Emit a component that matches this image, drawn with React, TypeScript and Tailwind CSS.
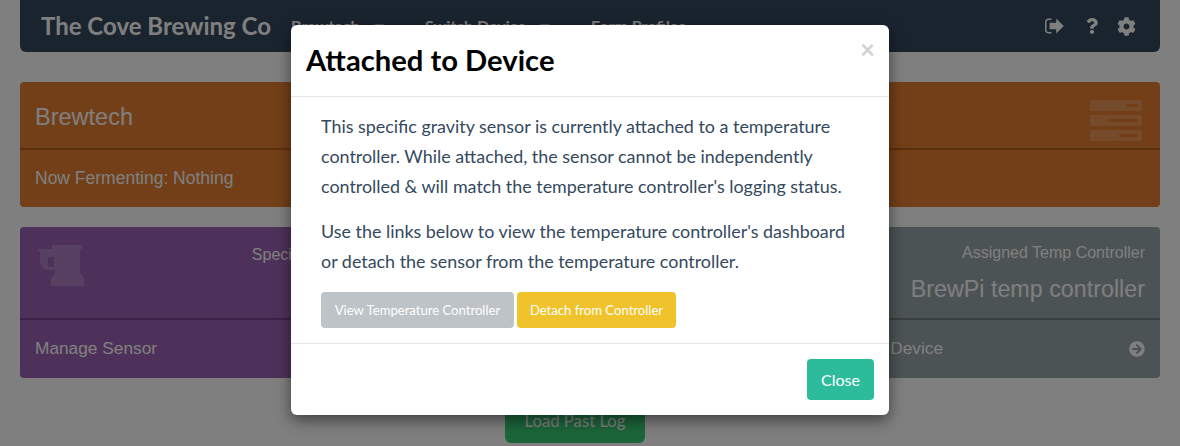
import React from 'react';
import { FaArrowCircleRight, FaCog, FaQuestion } from 'react-icons/fa';

function SignOutIcon() {
  return (
    <svg viewBox="0 0 19 16" className="h-[16px] w-[19px] fill-white">
      <path d="M6.5 0.5H3.6C1.6 0.5 0 2.1 0 4.1v7.8c0 2 1.6 3.6 3.6 3.6h2.9v-1.5H3.6c-1.1 0-2.1-.9-2.1-2.1V4.1c0-1.2 1-2.1 2.1-2.1h2.9z" />
      <path d="M11.2 0.6 18.8 8l-7.6 7.4v-4.2H4.6V4.8h6.6z" />
    </svg>
  );
}

function ServerIcon() {
  return (
    <div className="flex w-[52px] flex-col gap-[4px]">
      {[12, 30, 19].map((w) => (
        <div key={w} className="flex h-[11px] items-center justify-end rounded-[2px] bg-white/20 pr-[4px]">
          <div className="h-[3px] bg-[#e67e30]" style={{ width: w }} />
        </div>
      ))}
    </div>
  );
}

function MugIcon() {
  return (
    <svg viewBox="0 0 47 42" className="h-[42px] w-[47px] fill-white/20">
      <path
        fillRule="evenodd"
        d="M0 4H14V0H44V3L42 5V28L46 33V41H13V33L17 29V25H11C5 25 2 21 2 15V7L0 6ZM10 12V19C10 21 11 22 12 22H16V12Z"
      />
    </svg>
  );
}

function Caret() {
  return <span className="h-0 w-0 border-x-[5px] border-t-[5px] border-x-transparent border-t-white/50" />;
}

export default function App() {
  return (
    <div className="relative h-[446px] w-[1180px] overflow-hidden bg-white font-['Liberation_Sans',sans-serif] text-white">
      <div className="px-5">
        {/* Navbar */}
        <nav className="flex h-[52px] items-center rounded-b-[6px] bg-[#34495e] pl-[21px] pr-[24px] font-['Lato',sans-serif]">
          <span className="w-[250px] text-[24px] font-bold">The Cove Brewing Co</span>
          <div className="flex text-[16px] font-bold">
            <span className="flex w-[134px] items-center gap-[14px]">
              Brewtech <Caret />
            </span>
            <span className="flex w-[166px] items-center gap-[14px]">
              Switch Device <Caret />
            </span>
            <span>Form Profiles</span>
          </div>
          <div className="ml-auto flex items-center">
            <SignOutIcon />
            <FaQuestion className="ml-[22px] h-[16px] w-[12px]" />
            <FaCog className="ml-[19px] h-[19px] w-[19px]" />
          </div>
        </nav>

        {/* Brewtech panel */}
        <section className="mt-[30px] rounded-[4px] bg-[#e67e30]">
          <div className="flex h-[68px] items-start justify-between border-b-2 border-[#b5611f] pl-[15px] pr-[18px] pt-[18px]">
            <span className="text-[23.5px] leading-[34px]">Brewtech</span>
            <ServerIcon />
          </div>
          <div className="flex h-[57px] items-center pl-[15px] text-[17.5px]">Now Fermenting: Nothing</div>
        </section>

        {/* Device cards */}
        <div className="mt-5 grid grid-cols-[358px_1fr_352px] gap-5">
          <section className="rounded-[4px] bg-[#9c62b4]">
            <div className="flex h-[93px] justify-between border-b-2 border-[#7a4290] pl-[18px] pr-[15px] pt-[18px]">
              <MugIcon />
              <span className="text-[16px] leading-[20px]">Specific Gravity</span>
            </div>
            <div className="flex h-[58px] items-center pl-[15px] text-[17.3px]">Manage Sensor</div>
          </section>
          <section />
          <section className="rounded-[4px] bg-[#98a6a8]">
            <div className="flex h-[93px] flex-col items-end border-b-2 border-[#75817f] pr-[15px] pt-[16px]">
              <span className="text-[16px] leading-[20px]">Assigned Temp Controller</span>
              <span className="mt-[10px] text-[23.3px] leading-[32px]">BrewPi temp controller</span>
            </div>
            <div className="flex h-[58px] items-center justify-between pl-[15px] pr-[15px] text-[17.3px]">
              <span>Manage Device</span>
              <FaArrowCircleRight className="h-[16px] w-[16px]" />
            </div>
          </section>
        </div>

        <div className="ml-[485px] mt-[22px]">
          <button className="h-[43px] w-[140px] rounded-[6px] bg-[#38ca74] font-['Lato',sans-serif] text-[16.7px]">
            Load Past Log
          </button>
        </div>
      </div>

      {/* Modal */}
      <div className="absolute inset-0 flex justify-center bg-black/50 pt-[25px] font-['Lato',sans-serif]">
        <div className="h-[390px] w-[598px] rounded-[6px] bg-white shadow-[0_5px_15px_rgba(0,0,0,0.5)]">
          <div className="flex h-[72px] items-start justify-between border-b border-[#e5e5e5] pl-[15px] pr-[14px]">
            <h1 className="pt-[15px] text-[29.2px] font-bold leading-[40px] text-black">Attached to Device</h1>
            <span className="pt-[11px] text-[26px] font-bold leading-[26px] text-[#d2d2d2]">×</span>
          </div>
          <div className="h-[246px] px-[30px] pt-[14px] text-[17.9px] leading-[30px] text-[#34495e]">
            <p>
              This specific gravity sensor is currently attached to a temperature controller. While attached, the sensor
              cannot be independently controlled &amp; will match the temperature controller's logging status.
            </p>
            <p className="mt-[15px]">
              Use the links below to view the temperature controller's dashboard or detach the sensor from the
              temperature controller.
            </p>
            <div className="mt-[16px] flex gap-[3px] text-[13.1px] text-white">
              <button className="h-[36px] w-[193px] rounded-[4px] bg-[#bdc3c7]">View Temperature Controller</button>
              <button className="h-[36px] w-[159px] rounded-[4px] bg-[#f0c32c]">Detach from Controller</button>
            </div>
          </div>
          <div className="flex justify-end border-t border-[#e5e5e5] pr-[15px] pt-[15px]">
            <button className="h-[41px] w-[67px] rounded-[4px] bg-[#2cbc9c] text-[16px] text-white">Close</button>
          </div>
        </div>
      </div>
    </div>
  );
}
